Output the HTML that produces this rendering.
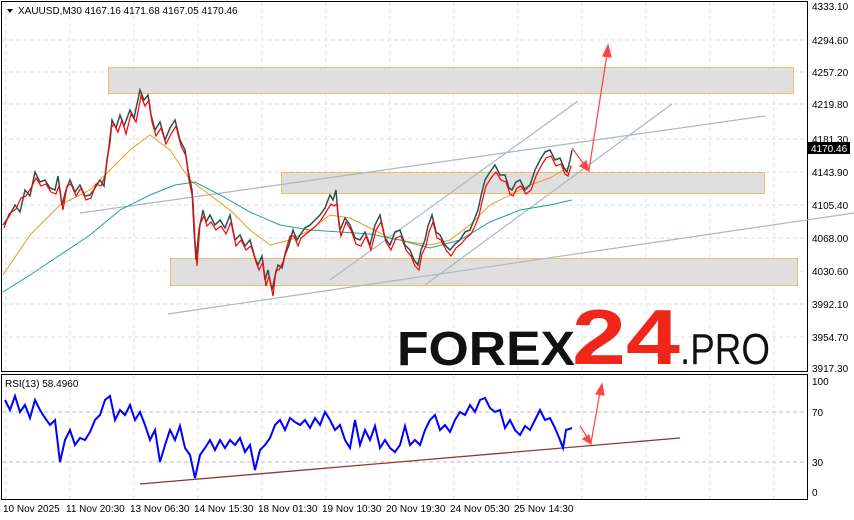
<!DOCTYPE html><html><head><style>body{margin:0;background:#fff}svg{display:block;font-family:"Liberation Sans",sans-serif}</style></head><body>
<svg width="854" height="520" viewBox="0 0 854 520" xmlns="http://www.w3.org/2000/svg">
<rect width="854" height="520" fill="#fff"/>
<g stroke="#ddd" stroke-dasharray="4,3" stroke-width="1">
<path d="M2 40H806M2 72H806M2 104H806M2 139H806M2 172H806M2 205H806M2 238H806M2 271H806M2 304H806M2 337H806"/>
<path d="M2 412H806M2 462H806" stroke="#bbb"/>
<path d="M6 2V371M70 2V371M134 2V371M198 2V371M262 2V371M326 2V371M390 2V371M454 2V371M518 2V371M582 2V371M646 2V371M710 2V371M774 2V371"/>
<path d="M6 376V499M70 376V499M134 376V499M198 376V499M262 376V499M326 376V499M390 376V499M454 376V499M518 376V499M582 376V499M646 376V499M710 376V499M774 376V499"/>
</g>
<rect x="1.5" y="1.5" width="806" height="370" fill="none" stroke="#000"/>
<rect x="1.5" y="374.5" width="806" height="125" fill="none" stroke="#000"/>
<g fill="#ddd" fill-opacity=".95" stroke="#f0c060">
<rect x="108.5" y="67.5" width="685" height="26"/>
<rect x="281.5" y="172.5" width="483" height="21"/>
<rect x="170.5" y="258.5" width="627" height="27"/>
</g>
<g stroke="#a8b8c4" stroke-width="1.2" fill="none">
<path d="M80 213L765 116M168 314L854 213M330 280L578 101M425 285L672 104"/>
</g>
<polyline fill="none" stroke="#e0a020" stroke-width="1" points="3,275 30,235 60,205 90,190 110,170 130,150 150,135 170,150 190,180 210,195 230,210 250,230 270,245 290,240 310,230 330,215 350,218 370,228 390,238 410,242 430,245 450,240 470,225 490,205 510,195 530,185 550,178 572,165"/>
<polyline fill="none" stroke="#20a0a0" stroke-width="1" points="3,292 30,275 60,255 90,235 120,210 150,195 175,185 195,182 220,195 250,212 280,225 310,230 340,232 370,234 400,240 430,248 460,240 490,222 520,210 550,205 572,200"/>
<polyline fill="none" stroke="#2f4f4f" stroke-width="1.5" points="3,225 8,218 15,205 20,212 25,190 30,196 35,172 40,182 45,180 50,188 55,190 58,176 62,205 66,190 70,180 75,192 80,185 85,196 90,195 95,188 100,180 104,186 107,160 110,142 112,120 116,128 120,115 124,126 130,110 134,118 140,90 144,100 148,95 151,115 155,130 160,122 165,140 170,128 175,120 180,140 185,150 188,170 192,190 194,230 196,260 199,230 203,210 206,222 210,215 215,225 220,220 225,228 230,215 235,240 240,235 245,246 250,240 255,258 258,265 262,256 265,280 268,270 272,290 275,276 278,265 282,268 285,255 289,245 293,230 297,240 300,235 305,228 310,225 315,220 320,215 325,208 330,195 333,200 336,190 338,215 340,230 345,218 350,225 355,238 360,240 365,232 370,245 375,225 380,215 385,238 390,245 395,232 400,230 405,245 410,250 414,260 418,265 421,250 425,240 428,226 432,215 436,232 440,235 445,245 450,250 455,244 460,240 465,232 470,230 474,220 478,210 481,196 485,180 490,172 495,165 500,175 505,175 509,188 512,190 516,182 520,180 525,190 530,185 535,170 540,160 545,152 550,150 555,160 560,158 564,168 567,172 570,160 572,150"/>
<polyline fill="none" stroke="#f00" stroke-width="1.2" points="4,228 9,214 16,209 21,198 26,196 31,188 36,178 41,186 46,184 51,192 56,194 59,186 63,210 67,186 71,184 76,196 81,188 86,200 91,198 96,184 101,186 105,176 108,154 111,128 114,124 118,132 122,120 126,134 131,114 136,122 141,96 145,106 149,100 152,122 156,136 161,128 166,144 171,134 176,126 181,146 186,156 189,180 193,200 195,240 197,266 200,224 204,216 207,226 211,222 216,230 221,226 226,234 231,222 236,246 241,240 246,250 251,246 256,262 259,270 263,262 266,286 269,276 273,296 276,270 279,270 283,262 286,250 290,236 294,236 298,246 301,238 306,234 311,230 316,226 321,220 326,212 331,204 334,206 337,204 339,225 341,236 346,222 351,230 356,244 361,246 366,236 371,250 376,230 381,222 386,242 391,250 396,238 401,236 406,250 411,256 415,266 419,270 422,254 426,246 429,232 433,222 437,238 441,240 446,250 451,256 456,248 461,244 466,238 471,234 475,226 479,216 482,202 486,186 491,178 496,172 501,180 506,182 510,194 513,196 517,188 521,186 526,194 531,190 536,176 541,166 546,158 551,156 556,166 561,164 565,174 568,176 571,166"/>
<g stroke="#f44" stroke-width="1.2" fill="#f44">
<path d="M572 148L586 167" fill="none"/><path d="M589 171L580 166L586 161Z"/>
<path d="M589 170L607 54" fill="none"/><path d="M608 45L603 56L611 57Z"/>
<path d="M580 426L589 440" fill="none"/><path d="M591 444L583 439L589 435Z"/>
<path d="M591 443L600 392" fill="none"/><path d="M602 384L596 394L604 395Z"/>
</g>
<path d="M140 484L680 438" stroke="#8b3a3a" stroke-width="1.3"/>
<polyline fill="none" stroke="#00f" stroke-width="2" points="5,400 10,410 15,396 20,412 25,405 30,418 35,400 40,410 45,418 50,425 55,420 60,462 65,440 70,430 75,445 80,438 85,440 90,432 95,420 100,415 105,400 110,396 115,420 120,410 125,415 130,405 135,420 140,412 145,425 150,440 155,430 160,462 165,445 170,430 175,440 180,426 185,448 190,455 195,478 200,455 205,448 210,440 215,450 220,440 225,448 230,440 235,445 240,438 245,452 250,445 255,470 260,450 265,445 270,438 275,425 280,420 285,430 290,418 295,422 300,425 305,420 310,428 315,418 320,425 325,412 330,420 335,430 340,425 345,440 350,448 355,420 360,445 365,430 370,440 375,426 380,448 385,440 390,448 395,452 400,445 405,426 410,445 415,440 420,445 425,430 430,420 435,415 440,430 445,425 450,432 455,420 460,412 465,415 470,405 475,412 480,400 485,398 490,408 495,412 500,410 505,428 510,420 515,430 520,435 525,426 530,430 535,420 540,410 545,420 550,418 555,428 560,440 563,448 566,430 572,428"/>
<g font-size="10" fill="#000">
<text x="812" y="10">4333.10</text><text x="812" y="44">4294.60</text><text x="812" y="76">4257.20</text><text x="812" y="108">4219.80</text><text x="812" y="143">4181.30</text><text x="812" y="176">4143.90</text><text x="812" y="209">4105.40</text><text x="812" y="242">4068.00</text><text x="812" y="275">4030.60</text><text x="812" y="308">3992.10</text><text x="812" y="341">3954.70</text><text x="812" y="372">3917.30</text>
<text x="812" y="385">100</text><text x="812" y="416">70</text><text x="812" y="466">30</text><text x="812" y="496">0</text>
<text x="3" y="512">10 Nov 2025</text><text x="66" y="512">11 Nov 20:30</text><text x="130" y="512">13 Nov 06:30</text><text x="194" y="512">14 Nov 15:30</text><text x="258" y="512">18 Nov 01:30</text><text x="322" y="512">19 Nov 10:30</text><text x="386" y="512">20 Nov 19:30</text><text x="450" y="512">24 Nov 05:30</text><text x="514" y="512">25 Nov 14:30</text>
<text x="18" y="14">XAUUSD,M30  4167.16 4171.68 4167.05 4170.46</text>
<text x="5" y="387">RSI(13) 58.4960</text>
</g>
<path d="M7 9L13 9L10 13Z" fill="#000"/>
<rect x="808" y="142" width="42" height="12" fill="#000"/><text x="811" y="152" font-size="10" fill="#fff">4170.46</text>
<g font-family="'Liberation Sans',sans-serif">
<text x="397" y="365" font-size="48" font-weight="bold" fill="#111" textLength="178" lengthAdjust="spacingAndGlyphs">FOREX</text>
<text x="572" y="364" font-size="78" font-weight="bold" fill="#f0261a" textLength="108" lengthAdjust="spacingAndGlyphs">24</text>
<text x="680" y="364" font-size="44" fill="#111" textLength="90" lengthAdjust="spacingAndGlyphs">.PRO</text>
</g>
</svg>
</body></html>
